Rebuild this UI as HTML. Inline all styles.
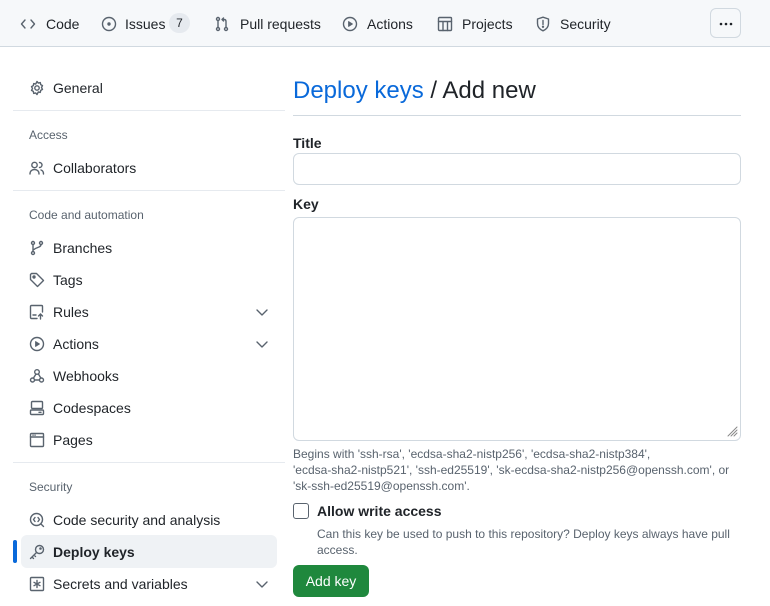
<!DOCTYPE html>
<html><head><meta charset="utf-8"><style>
*{box-sizing:border-box;margin:0;padding:0}
body{width:770px;height:606px;overflow:hidden;background:#fff;font-family:"Liberation Sans",Arial,sans-serif;color:#1f2328;font-size:14px;position:relative}
.nav{position:absolute;left:0;top:0;width:770px;height:47px;background:#f6f8fa;border-bottom:1px solid #d1d9e0}
.ni{position:absolute;top:15px;font-size:14px;color:#1f2328;line-height:18px}
.ico{position:absolute}
svg{fill:none;stroke:#59636e;stroke-width:1.4;stroke-linecap:round;stroke-linejoin:round}
.cnt{position:absolute;left:169px;top:13px;width:21px;height:20px;border-radius:10px;background:#e6eaef;font-size:12px;text-align:center;line-height:20px}
.more{position:absolute;left:710px;top:8px;width:31px;height:30px;border:1px solid #d1d9e0;border-radius:6px;background:#f6f8fa}
.si{position:absolute;left:53px;font-size:14px;line-height:18px;color:#1f2328}
.lab{position:absolute;left:29px;font-size:12px;color:#59636e;line-height:16px}
.div{position:absolute;left:13px;width:272px;height:1px;background:#e6eaef}
.chev{position:absolute;left:254px}
.help{position:absolute;left:293px;font-size:12px;color:#59636e;line-height:16px}
</style></head><body>
<div class="nav">
<svg class="ico" style="left:20px;top:16px" width="16" height="16" viewBox="0 0 16 16"><path d="M5 4L1.5 8 5 12M11 4l3.5 4L11 12"/></svg>
<div class="ni" style="left:46px">Code</div>
<svg class="ico" style="left:101px;top:16px" width="16" height="16" viewBox="0 0 16 16"><circle cx="8" cy="8" r="6.5"/><circle cx="8" cy="8" r="1" fill="#59636e"/></svg>
<div class="ni" style="left:125px">Issues</div>
<div class="cnt">7</div>
<svg class="ico" style="left:214px;top:16px" width="16" height="16" viewBox="0 0 16 16"><circle cx="4" cy="3" r="1.5"/><circle cx="4" cy="13" r="1.5"/><circle cx="12" cy="13" r="1.5"/><path d="M4 4.5v7M12 11.5V5.5Q12 3.5 10 3.5H8M9.5 2L8 3.5 9.5 5"/></svg>
<div class="ni" style="left:240px">Pull requests</div>
<svg class="ico" style="left:342px;top:16px" width="16" height="16" viewBox="0 0 16 16"><circle cx="8" cy="8" r="6.5"/><path d="M6.5 5.5v5l4-2.5z" fill="#59636e" stroke-width="0.8"/></svg>
<div class="ni" style="left:367px">Actions</div>
<svg class="ico" style="left:437px;top:16px" width="16" height="16" viewBox="0 0 16 16"><rect x="1.5" y="1.5" width="13" height="13" rx="1"/><path d="M1.5 5.5h13M6 5.5v9M10.5 5.5v9"/></svg>
<div class="ni" style="left:462px">Projects</div>
<svg class="ico" style="left:535px;top:16px" width="16" height="16" viewBox="0 0 16 16"><path d="M8 1.2L2.5 3v4.5c0 3.5 2.5 6 5.5 7.3 3-1.3 5.5-3.8 5.5-7.3V3z"/><path d="M8 4.5v4"/><circle cx="8" cy="10.8" r=".5" fill="#59636e"/></svg>
<div class="ni" style="left:560px">Security</div>
<div class="more"><svg style="position:absolute;left:7px;top:7px;stroke:none" width="16" height="16" viewBox="0 0 16 16"><circle cx="3" cy="8" r="1.3" fill="#1f2328"/><circle cx="8" cy="8" r="1.3" fill="#1f2328"/><circle cx="13" cy="8" r="1.3" fill="#1f2328"/></svg></div>
</div>

<svg class="ico" style="left:29px;top:80px" width="16" height="16" viewBox="0 0 16 16"><circle cx="8" cy="8" r="2.2"/><path d="M8 1.5l1.3 1.6 2-.5.4 2 1.8 1-1 1.9 1 1.9-1.8 1-.4 2-2-.5L8 14.5l-1.3-1.6-2 .5-.4-2-1.8-1 1-1.9-1-1.9 1.8-1 .4-2 2 .5z"/></svg>
<div class="si" style="top:79px">General</div>
<div class="div" style="top:110px"></div>
<div class="lab" style="top:127px">Access</div>
<svg class="ico" style="left:29px;top:160px" width="16" height="16" viewBox="0 0 16 16"><circle cx="5.5" cy="5" r="2.7"/><path d="M1 14c0-3 2-4.5 4.5-4.5S10 11 10 14M10.5 2.5a2.5 2.5 0 010 5M12 10c1.5.5 2.5 2 2.5 4"/></svg>
<div class="si" style="top:159px">Collaborators</div>
<div class="div" style="top:190px"></div>
<div class="lab" style="top:207px">Code and automation</div>
<svg class="ico" style="left:29px;top:240px" width="16" height="16" viewBox="0 0 16 16"><circle cx="4" cy="3" r="1.5"/><circle cx="4" cy="13" r="1.5"/><circle cx="12" cy="3" r="1.5"/><path d="M4 4.5v7M12 4.5c0 3-4 2.5-7 5"/></svg>
<div class="si" style="top:239px">Branches</div>
<svg class="ico" style="left:29px;top:272px" width="16" height="16" viewBox="0 0 16 16"><path d="M1.5 2.5v5l7 7 6-6-7-7h-5z"/><circle cx="5" cy="5" r="1" fill="#59636e"/></svg>
<div class="si" style="top:271px">Tags</div>
<svg class="ico" style="left:29px;top:304px" width="16" height="16" viewBox="0 0 16 16"><path d="M8 14.5H2.5a1 1 0 01-1-1v-11a1 1 0 011-1h10a1 1 0 011 1V8M4 11h3M11.5 15v-5M9.5 12l2-2 2 2"/></svg>
<div class="si" style="top:303px">Rules</div>
<svg class="chev" style="top:304px" width="16" height="16" viewBox="0 0 16 16"><path d="M3 6l5 5 5-5"/></svg>
<svg class="ico" style="left:29px;top:336px" width="16" height="16" viewBox="0 0 16 16"><circle cx="8" cy="8" r="6.5"/><path d="M6.5 5.5v5l4-2.5z" fill="#59636e" stroke-width="0.8"/></svg>
<div class="si" style="top:335px">Actions</div>
<svg class="chev" style="top:336px" width="16" height="16" viewBox="0 0 16 16"><path d="M3 6l5 5 5-5"/></svg>
<svg class="ico" style="left:29px;top:368px" width="16" height="16" viewBox="0 0 16 16"><circle cx="8" cy="4" r="2.3"/><circle cx="3.5" cy="12" r="2"/><circle cx="12.5" cy="12" r="2"/><path d="M7 6L4.5 10M5.5 12h5M9.3 5.8l2.5 4.2"/></svg>
<div class="si" style="top:367px">Webhooks</div>
<svg class="ico" style="left:29px;top:400px" width="16" height="16" viewBox="0 0 16 16"><rect x="2.5" y="1.5" width="11" height="7" rx="1"/><rect x="1.5" y="10" width="13" height="4.5" rx="1"/><path d="M10 12.3h2"/></svg>
<div class="si" style="top:399px">Codespaces</div>
<svg class="ico" style="left:29px;top:432px" width="16" height="16" viewBox="0 0 16 16"><rect x="1.5" y="1.5" width="13" height="13" rx="1"/><path d="M1.5 5h13M4 3.2h.1M6 3.2h.1"/></svg>
<div class="si" style="top:431px">Pages</div>
<div class="div" style="top:462px"></div>
<div class="lab" style="top:479px">Security</div>
<svg class="ico" style="left:29px;top:512px" width="16" height="16" viewBox="0 0 16 16"><circle cx="7.5" cy="7.5" r="6"/><path d="M12 12l2.5 2.5M6 5.5L4.5 7.5 6 9.5M9 5.5l1.5 2L9 9.5"/></svg>
<div class="si" style="top:511px">Code security and analysis</div>
<div style="position:absolute;left:21px;top:535px;width:256px;height:33px;background:#eff2f5;border-radius:6px"></div>
<div style="position:absolute;left:13px;top:540px;width:4px;height:23px;background:#0969da;border-radius:2px"></div>
<svg class="ico" style="left:29px;top:544px" width="16" height="16" viewBox="0 0 16 16"><circle cx="10.5" cy="5.5" r="4"/><path d="M7.5 8.5l-6 6M3 13l1.5 1.5M5 11l1.5 1.5"/><circle cx="11.5" cy="4.5" r=".6" fill="#59636e"/></svg>
<div class="si" style="top:543px;font-weight:bold">Deploy keys</div>
<svg class="ico" style="left:29px;top:576px" width="16" height="16" viewBox="0 0 16 16"><rect x="1.5" y="1.5" width="13" height="13" rx="1"/><path d="M8 4.5v7M5 6.3l6 3.4M11 6.3L5 9.7"/></svg>
<div class="si" style="top:575px">Secrets and variables</div>
<svg class="chev" style="top:576px" width="16" height="16" viewBox="0 0 16 16"><path d="M3 6l5 5 5-5"/></svg>

<div style="position:absolute;left:293px;top:76px;font-size:24px;line-height:30px"><span style="color:#0969da">Deploy keys</span> / Add new</div>
<div style="position:absolute;left:293px;top:115px;width:448px;height:1px;background:#d1d9e0"></div>
<div style="position:absolute;left:293px;top:135px;font-weight:bold;line-height:17px">Title</div>
<div style="position:absolute;left:293px;top:153px;width:448px;height:32px;border:1px solid #d1d9e0;border-radius:6px"></div>
<div style="position:absolute;left:293px;top:196px;font-weight:bold;line-height:17px">Key</div>
<div style="position:absolute;left:293px;top:217px;width:448px;height:224px;border:1px solid #d1d9e0;border-radius:6px"></div>
<svg style="position:absolute;left:725px;top:424px;stroke:#888;stroke-width:1" width="14" height="14" viewBox="0 0 14 14"><path d="M12 3L3 12M12 6L6 12M12 9L9 12"/></svg>
<div class="help" style="top:446px">Begins with 'ssh-rsa', 'ecdsa-sha2-nistp256', 'ecdsa-sha2-nistp384',<br>'ecdsa-sha2-nistp521', 'ssh-ed25519', 'sk-ecdsa-sha2-nistp256@openssh.com', or<br>'sk-ssh-ed25519@openssh.com'.</div>
<div style="position:absolute;left:293px;top:503px;width:16px;height:16px;border:1px solid #59636e;border-radius:3px"></div>
<div style="position:absolute;left:317px;top:503px;font-weight:bold;line-height:17px">Allow write access</div>
<div class="help" style="left:317px;top:526px">Can this key be used to push to this repository? Deploy keys always have pull<br>access.</div>
<div style="position:absolute;left:293px;top:565px;width:76px;height:32px;background:#1f883d;border-radius:6px;color:#fff;text-align:center;line-height:32px;font-size:14px">Add key</div>
</body></html>
